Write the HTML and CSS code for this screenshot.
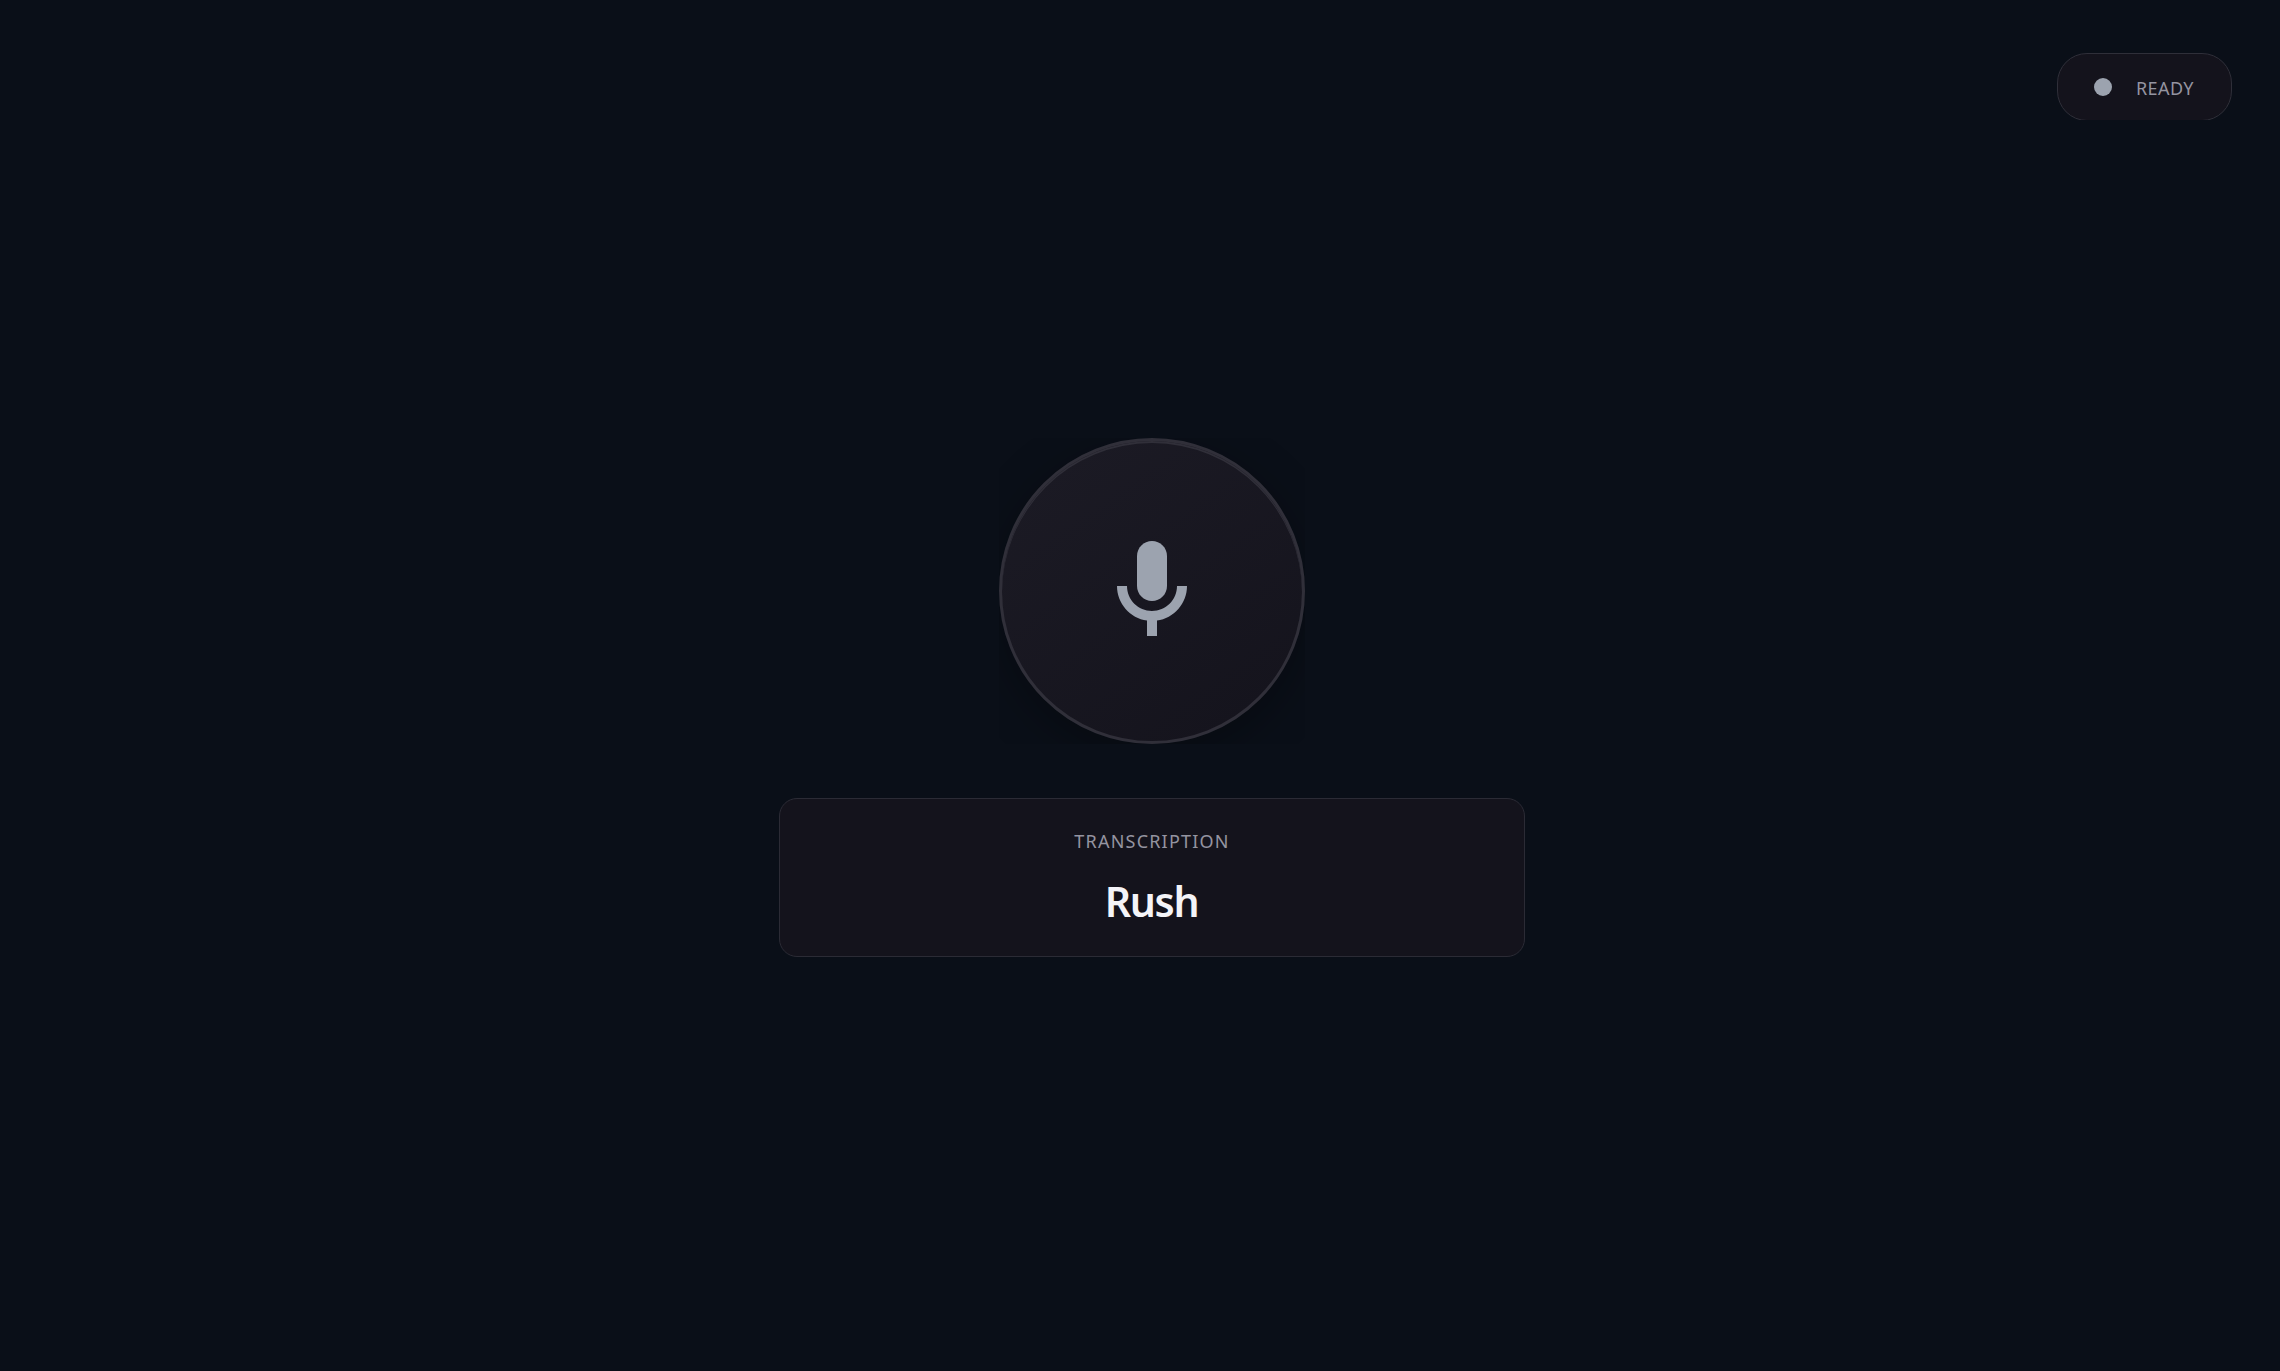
FILE: index.html
```
<!DOCTYPE html>
<html lang="en">
<head>
<meta charset="utf-8">
<title>Voice</title>
<link rel="stylesheet" href="styles.css">
</head>
<body>
<div class="app">
  <header class="topbar">
    <div class="status-clip">
      <div class="status"><span class="status-dot"></span><span class="status-label">READY</span></div>
    </div>
  </header>
  <main class="stage">
    <div class="mic-box">
      <button class="mic" aria-label="Microphone">
        <svg class="mic-icon" viewBox="0 0 24 24" aria-hidden="true">
          <path d="M12 14c1.66 0 3-1.34 3-3V5c0-1.66-1.34-3-3-3S9 3.34 9 5v6c0 1.66 1.34 3 3 3z"/>
          <path d="M17 11c0 2.76-2.24 5-5 5s-5-2.24-5-5H5c0 3.53 2.61 6.43 6 6.92V21h2v-3.08c3.39-.49 6-3.39 6-6.92h-2z"/>
        </svg>
      </button>
    </div>
    <section class="card">
      <div class="card-label">TRANSCRIPTION</div>
      <div class="card-text">Rush</div>
    </section>
  </main>
</div>
</body>
</html>
```
FILE: styles.css
```
* { box-sizing: border-box; }
body {
  margin: 0;
  background: #0a0f18;
  font-family: "Noto Sans", "Open Sans", sans-serif;
}
.app {
  height: 1371px;
  display: flex;
  flex-direction: column;
  overflow: hidden;
}
.topbar {
  display: flex;
  justify-content: flex-end;
  padding: 53px 48px 0 0;
}
.status-clip { height: 67px; overflow: hidden; }
.status {
  width: 175px;
  height: 68px;
  display: flex;
  align-items: center;
  gap: 24px;
  padding-left: 36px;
  border: 1px solid #2f2f39;
  border-radius: 30px;
  background: #14131c;
}
.status-dot {
  width: 18px;
  height: 18px;
  border-radius: 50%;
  background: #9ca3af;
}
.status-label {
  font-size: 18px;
  line-height: 24px;
  letter-spacing: 0.4px;
  color: #9494a0;
  padding-top: 2px;
}
.stage {
  display: flex;
  flex-direction: column;
  align-items: center;
  gap: 54px;
  padding: 318px 0 0 24px;
}
.mic-box { width: 306px; height: 306px; overflow: hidden; }
.mic {
  width: 306px;
  height: 306px;
  padding: 0;
  display: flex;
  align-items: center;
  justify-content: center;
  border: 3px solid #302f39;
  border-radius: 50%;
  background: linear-gradient(145deg, #1c1b25, #14131c);
  box-shadow: 0 12px 48px rgba(0, 0, 0, 0.3), inset 0 2px 0 #302f39;
}
.mic-icon { width: 120px; height: 120px; fill: #9ca3af; }
.card {
  width: 746px;
  height: 159px;
  padding-top: 30px;
  border: 1px solid #2b2b35;
  border-radius: 18px;
  background: #14131c;
  text-align: center;
}
.card-label {
  font-size: 18px;
  line-height: 24px;
  letter-spacing: 1.2px;
  color: #9494a0;
}
.card-text {
  margin-top: 20px;
  font-size: 41px;
  line-height: 56px;
  font-weight: 600;
  letter-spacing: -1.4px;
  text-indent: -1px;
  color: #f4f4f8;
}
```
